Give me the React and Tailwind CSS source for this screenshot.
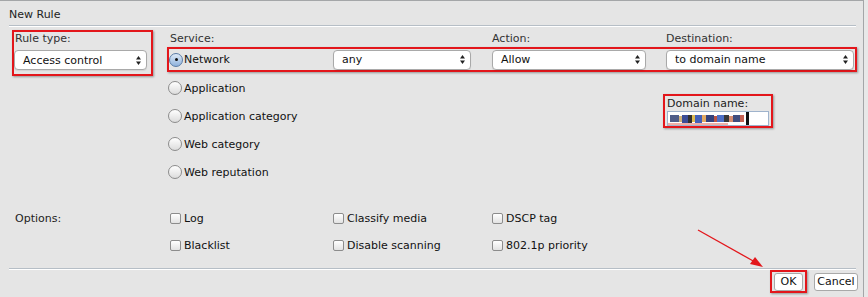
import React from "react";

const font = { fontFamily: '"DejaVu Sans", Verdana, sans-serif' };

function Arrows() {
    return (
        <svg width="5" height="9" viewBox="0 0 5 9" className="shrink-0">
            <path d="M2.5 0 L5 3.5 L0 3.5 Z" fill="#222" />
            <path d="M0 5.5 L5 5.5 L2.5 9 Z" fill="#222" />
        </svg>
    );
}

function Select({ value, className }) {
    return (
        <div
            className={`h-[20px] flex items-center justify-between pl-[8px] pr-[5px] bg-white border border-[#a9a9a9] rounded-[4px] shadow-[0_1px_1px_rgba(0,0,0,0.08)] ${className}`}
        >
            <span className="leading-[13px] text-[#111]">{value}</span>
            <Arrows />
        </div>
    );
}

function Radio({ checked }) {
    return checked ? (
        <span className="w-[14px] h-[14px] rounded-full border border-[#5a7ca6] bg-gradient-to-b from-[#dfeaf7] to-[#8fb2dc] flex items-center justify-center shrink-0">
            <span className="w-[3px] h-[3px] rounded-full bg-[#111]" />
        </span>
    ) : (
        <span className="w-[14px] h-[14px] rounded-full border border-[#8c8c8c] bg-gradient-to-b from-white to-[#dcdcdc] shrink-0" />
    );
}

function Checkbox({ label }) {
    return (
        <div className="flex items-center gap-[3px] h-[27px]">
            <span className="w-[11px] h-[11px] rounded-[2px] border border-[#8c8c8c] bg-gradient-to-b from-white to-[#e2e2e2] shrink-0" />
            <span className="leading-[13px] text-[#111]">{label}</span>
        </div>
    );
}

const services = ["Application", "Application category", "Web category", "Web reputation"];

// blurred domain text in the input
const blur = [
    ["w-[9px]", "h-[7px]", "bg-[#3b4a7a]"],
    ["w-[3px]", "h-[6px]", "bg-[#c9a96a]"],
    ["w-[6px]", "h-[8px]", "bg-[#263a8c]"],
    ["w-[4px]", "h-[8px]", "bg-[#1a1a1a]"],
    ["w-[3px]", "h-[7px]", "bg-[#d9b23c]"],
    ["w-[7px]", "h-[8px]", "bg-[#2f4fb0]"],
    ["w-[4px]", "h-[7px]", "bg-[#e0a050]"],
    ["w-[8px]", "h-[7px]", "bg-[#1f2d6e]"],
    ["w-[3px]", "h-[6px]", "bg-[#b04030]"],
    ["w-[7px]", "h-[7px]", "bg-[#3a5fc0]"],
    ["w-[5px]", "h-[7px]", "bg-[#222]"],
    ["w-[4px]", "h-[6px]", "bg-[#d08060]"],
    ["w-[7px]", "h-[7px]", "bg-[#2a3a70]"],
    ["w-[4px]", "h-[7px]", "bg-[#c05040]"],
];

export default function App() {
    return (
        <div className="w-[868px] h-[297px] bg-[#e8e8e8] text-[11px] text-[#111]" style={font}>
            <div className="relative w-[864px] h-[297px] bg-[#e5e5e5] border-t border-r border-[#a4a6a8]">
                {/* Title */}
                <div className="pt-[7px] pl-[9px] leading-[14px] text-[#222]">New Rule</div>
                <div className="mt-[3px] ml-[9px] w-[847px] h-[1px] bg-[#b6bec6]" />
                <div className="ml-[9px] w-[847px] h-[1px] bg-white" />

                {/* Main */}
                <div className="flex mt-[3px]">
                    <div className="ml-[12px] w-[141px] h-[46px] border-2 border-[#e3161b] shadow-[1px_1px_2px_rgba(0,0,0,0.35)] flex flex-col">
                        <span className="pl-[1px] leading-[13px] text-[#333]">Rule type:</span>
                        <Select value="Access control" className="mt-[5px] w-[133px]" />
                    </div>

                    <div className="ml-[14px] flex flex-col">
                        <div className="flex h-[17px] pt-[2px] leading-[13px] text-[#333]">
                            <span className="pl-[3px] w-[325px]">Service:</span>
                            <span className="w-[174px]">Action:</span>
                            <span>Destination:</span>
                        </div>

                        <div className="w-[690px] h-[25px] border-2 border-[#e3161b] shadow-[1px_1px_2px_rgba(0,0,0,0.35)] grid grid-cols-[164px_159px_174px_1fr] items-center">
                            <div className="flex items-center gap-[1px]">
                                <Radio checked />
                                <span className="leading-[13px]">Network</span>
                            </div>
                            <Select value="any" className="w-[138px]" />
                            <Select value="Allow" className="w-[154px]" />
                            <Select value="to domain name" className="w-[188px]" />
                        </div>

                        <div className="flex items-start">
                            <div className="w-[496px] mt-[2px] flex flex-col">
                                {services.map((s) => (
                                    <div key={s} className="h-[28px] flex items-center gap-[2px] ml-[1px]">
                                        <Radio />
                                        <span className="leading-[13px]">{s}</span>
                                    </div>
                                ))}
                            </div>
                            <div className="mt-[22px] w-[110px] h-[34px] border-2 border-[#e3161b] shadow-[1px_1px_2px_rgba(0,0,0,0.35)] flex flex-col">
                                <span className="mt-[1px] pl-[2px] leading-[13px] text-[#222]">Domain name:</span>
                                <div className="relative mt-[1px] ml-[2px] w-[102px] h-[15px] bg-white border border-[#9fb3cc] flex items-center pl-[2px] overflow-hidden">
                                    {blur.map((b, i) => (
                                        <span key={i} className={`${b[0]} ${b[1]} ${b[2]} opacity-90`} />
                                    ))}
                                    <span className="ml-[2px] w-[3px] h-[13px] bg-[#111]" />
                                    <span className="absolute left-0 bottom-0 w-[60px] h-[2px] bg-[#f0b0a8]" />
                                </div>
                            </div>
                        </div>
                    </div>
                </div>

                {/* Options */}
                <div className="flex mt-[19px]">
                    <div className="w-[170px] pl-[15px] h-[27px] flex items-center">
                        <span className="leading-[13px] text-[#222]">Options:</span>
                    </div>
                    <div className="grid grid-cols-[163px_159px_160px]">
                        <Checkbox label="Log" />
                        <Checkbox label="Classify media" />
                        <Checkbox label="DSCP tag" />
                        <Checkbox label="Blacklist" />
                        <Checkbox label="Disable scanning" />
                        <Checkbox label="802.1p priority" />
                    </div>
                </div>

                <div className="mt-[9px] ml-[9px] w-[847px] h-[1px] bg-[#b6bec6]" />
                <div className="ml-[9px] w-[847px] h-[1px] bg-white" />

                {/* Buttons */}
                <div className="flex justify-end items-center pr-[5px]">
                    <div className="w-[37px] h-[23px] border-2 border-[#e3161b] shadow-[1px_1px_2px_rgba(0,0,0,0.35)] flex items-center justify-center">
                        <button className="w-[29px] h-[18px] bg-white border border-[#a9a9a9] rounded-[3px] leading-[13px] text-[#111]">OK</button>
                    </div>
                    <button className="ml-[7px] w-[44px] h-[18px] bg-white border border-[#a9a9a9] rounded-[3px] leading-[13px] text-[#111]">Cancel</button>
                </div>

                {/* annotation arrow */}
                <svg className="absolute left-0 top-0 pointer-events-none" width="864" height="297">
                    <line x1="698" y1="229" x2="755" y2="261" stroke="#e3161b" strokeWidth="1.3" />
                    <path d="M763 266 L750 263 L755 256 Z" fill="#e3161b" />
                </svg>
            </div>
        </div>
    );
}
